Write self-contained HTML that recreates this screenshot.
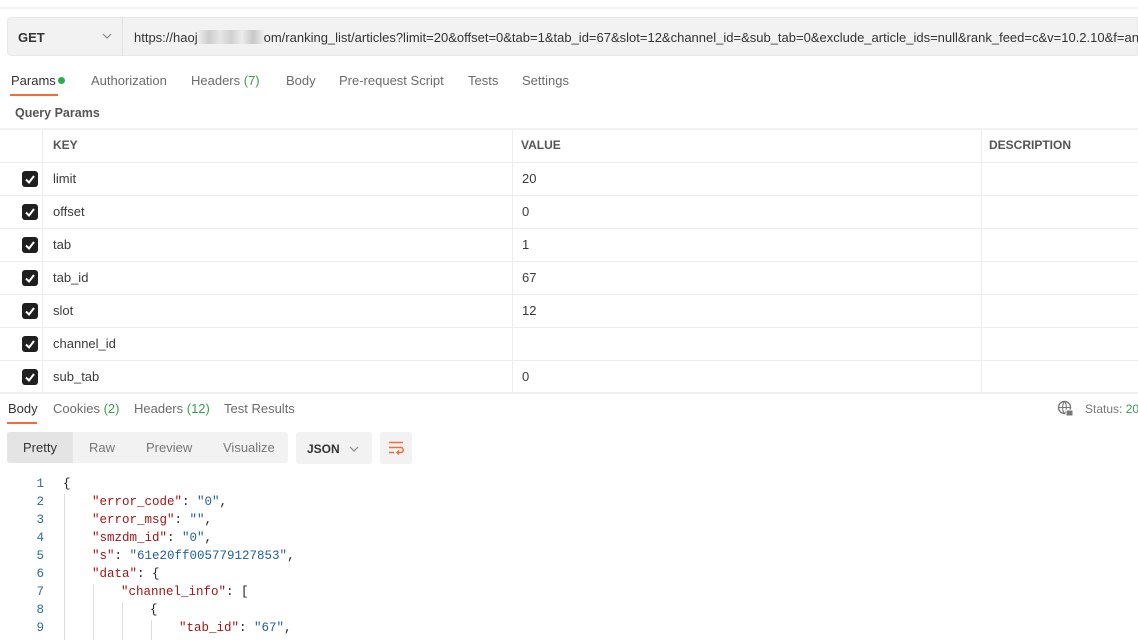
<!DOCTYPE html>
<html><head><meta charset="utf-8"><style>
*{margin:0;padding:0;box-sizing:border-box}
body{width:1138px;height:640px;overflow:hidden;background:#fff;font-family:"Liberation Sans",Arial,sans-serif;font-size:13px;color:#212121;position:relative}
.abs{position:absolute}
.hl{position:absolute;left:0;width:1138px;height:1px;background:#ededed}
.vl{position:absolute;width:1px;background:#ededed}
.tab{position:absolute;top:73px;color:#6b6b6b;font-size:13px}
.cb{position:absolute;left:22px;width:16px;height:16px;background:#1f1f1f;border-radius:3px}
.cb svg{position:absolute;left:2px;top:2px}
.k{position:absolute;left:53px;font-size:13px;color:#3a3a3a}
.v{position:absolute;left:522px;font-size:13px;color:#3a3a3a}
.code{font-family:"Liberation Mono",monospace;font-size:12.5px;position:absolute;white-space:pre}
.ln{position:absolute;left:20px;width:24px;text-align:right;color:#2a6f97;font-family:"Liberation Mono",monospace;font-size:12.5px}
.s{color:#a31515}.n{color:#1f5fa0}
</style></head><body>
<div class="abs" style="left:0;top:7px;width:1138px;height:2px;background:#f2f2f2"></div>
<div class="abs" style="left:7px;top:17px;width:1131px;height:39px;background:#f2f2f2;border-radius:4px 0 0 4px;border:1px solid #e8e8e8"></div>
<div class="abs" style="left:122px;top:17px;width:1px;height:39px;background:#e2e2e2"></div>
<div class="abs" style="left:18px;top:30px;font-weight:bold;font-size:13px;color:#333">GET</div>
<svg class="abs" style="left:102px;top:33px" width="10" height="7"><path d="M1 1L5 5L9 1" stroke="#888" fill="none" stroke-width="1.2"/></svg>
<div class="abs" style="left:134px;top:30px;font-size:13px;color:#333;white-space:nowrap">https://haoj<span style="display:inline-block;width:66px;height:14px;background:linear-gradient(90deg,#eee,#ccc,#e6e6e6,#d0d0d0,#ececec,#c8c8c8,#eee);vertical-align:-2px"></span>om/ranking_list/articles?limit=20&amp;offset=0&amp;tab=1&amp;tab_id=67&amp;slot=12&amp;channel_id=&amp;sub_tab=0&amp;exclude_article_ids=null&amp;rank_feed=c&amp;v=10.2.10&amp;f=android</div>
<div class="tab" style="left:11px;color:#333">Params</div>
<div class="abs" style="left:58px;top:77px;width:7px;height:7px;border-radius:50%;background:#26b14c"></div>
<div class="abs" style="left:10px;top:94px;width:48px;height:2px;background:#f26b3a"></div>
<div class="tab" style="left:91px">Authorization</div>
<div class="tab" style="left:191px">Headers <span style="color:#3b9d4f">(7)</span></div>
<div class="tab" style="left:286px">Body</div>
<div class="tab" style="left:339px">Pre-request Script</div>
<div class="tab" style="left:468px">Tests</div>
<div class="tab" style="left:522px">Settings</div>
<div class="abs" style="left:15px;top:106px;font-weight:bold;font-size:12.5px;color:#555">Query Params</div>
<div class="abs" style="left:0;top:128px;width:1138px;height:2px;background:#f2f2f2"></div>
<div class="vl" style="left:42px;top:129px;height:263px"></div>
<div class="vl" style="left:512px;top:129px;height:263px"></div>
<div class="vl" style="left:981px;top:129px;height:263px"></div>
<div class="abs" style="left:53px;top:138px;font-weight:bold;font-size:12px;color:#555">KEY</div>
<div class="abs" style="left:521px;top:138px;font-weight:bold;font-size:12px;color:#555">VALUE</div>
<div class="abs" style="left:989px;top:138px;font-weight:bold;font-size:12px;color:#555">DESCRIPTION</div>
<div class="hl" style="top:162px"></div><div class="hl" style="top:195px"></div><div class="hl" style="top:228px"></div><div class="hl" style="top:261px"></div><div class="hl" style="top:294px"></div><div class="hl" style="top:327px"></div><div class="hl" style="top:360px"></div>
<div class="hl" style="top:392px;height:2px;background:#f0f0f0"></div>

<div class="cb" style="top:171px"><svg width="12" height="12"><path d="M2 6.5L5 9.5L10 3" stroke="#fff" stroke-width="2" fill="none"/></svg></div><div class="k" style="top:171px">limit</div><div class="v" style="top:171px">20</div>
<div class="cb" style="top:204px"><svg width="12" height="12"><path d="M2 6.5L5 9.5L10 3" stroke="#fff" stroke-width="2" fill="none"/></svg></div><div class="k" style="top:204px">offset</div><div class="v" style="top:204px">0</div>
<div class="cb" style="top:237px"><svg width="12" height="12"><path d="M2 6.5L5 9.5L10 3" stroke="#fff" stroke-width="2" fill="none"/></svg></div><div class="k" style="top:237px">tab</div><div class="v" style="top:237px">1</div>
<div class="cb" style="top:270px"><svg width="12" height="12"><path d="M2 6.5L5 9.5L10 3" stroke="#fff" stroke-width="2" fill="none"/></svg></div><div class="k" style="top:270px">tab_id</div><div class="v" style="top:270px">67</div>
<div class="cb" style="top:303px"><svg width="12" height="12"><path d="M2 6.5L5 9.5L10 3" stroke="#fff" stroke-width="2" fill="none"/></svg></div><div class="k" style="top:303px">slot</div><div class="v" style="top:303px">12</div>
<div class="cb" style="top:336px"><svg width="12" height="12"><path d="M2 6.5L5 9.5L10 3" stroke="#fff" stroke-width="2" fill="none"/></svg></div><div class="k" style="top:336px">channel_id</div>
<div class="cb" style="top:369px"><svg width="12" height="12"><path d="M2 6.5L5 9.5L10 3" stroke="#fff" stroke-width="2" fill="none"/></svg></div><div class="k" style="top:369px">sub_tab</div><div class="v" style="top:369px">0</div>

<div class="abs" style="left:8px;top:401px;color:#333">Body</div>
<div class="abs" style="left:7px;top:422px;width:30px;height:2px;background:#f26b3a"></div>
<div class="abs" style="left:53px;top:401px;color:#6b6b6b">Cookies <span style="color:#3b9d4f">(2)</span></div>
<div class="abs" style="left:134px;top:401px;color:#6b6b6b">Headers <span style="color:#3b9d4f">(12)</span></div>
<div class="abs" style="left:224px;top:401px;color:#6b6b6b">Test Results</div>
<svg class="abs" style="left:1057px;top:400px" width="17" height="17" viewBox="0 0 17 17"><circle cx="7.5" cy="7.5" r="6" fill="none" stroke="#777" stroke-width="1.4"/><path d="M1.5 7.5H13.5M7.5 1.5C5 4 5 11 7.5 13.5M7.5 1.5C10 4 10 11 7.5 13.5" stroke="#777" fill="none" stroke-width="1.1"/><rect x="9" y="10" width="7" height="6" rx="1" fill="#777" stroke="#fff"/></svg>
<div class="abs" style="left:1085px;top:402px;font-size:12px;color:#777;white-space:nowrap">Status: <span style="color:#3b9d4f">200</span></div>

<div class="abs" style="left:7px;top:432px;width:281px;height:31px;background:#f2f2f2;border-radius:3px"></div>
<div class="abs" style="left:7px;top:432px;width:66px;height:31px;background:#e4e4e4;border-radius:3px 0 0 3px"></div>
<div class="abs" style="left:23px;top:440px;color:#333">Pretty</div>
<div class="abs" style="left:89px;top:440px;color:#777">Raw</div>
<div class="abs" style="left:146px;top:440px;color:#777">Preview</div>
<div class="abs" style="left:223px;top:440px;color:#777">Visualize</div>
<div class="abs" style="left:296px;top:432px;width:76px;height:32px;background:#f2f2f2;border-radius:3px"></div>
<div class="abs" style="left:307px;top:442px;font-weight:bold;font-size:12px;color:#333">JSON</div>
<svg class="abs" style="left:349px;top:446px" width="10" height="7"><path d="M1 1L5 5L9 1" stroke="#888" fill="none" stroke-width="1.2"/></svg>
<div class="abs" style="left:380px;top:432px;width:32px;height:32px;background:#f2f2f2;border-radius:3px"></div>
<svg class="abs" style="left:388px;top:441px" width="17" height="14"><path d="M1 1.5H15M1 6.5H13C16 6.5 16 11.5 13 11.5H9M1 11.5H6M11 9.5L9 11.5L11 13.5" stroke="#f26b3a" stroke-width="1.4" fill="none"/></svg>

<div class="ln" style="top:477px">1</div><div class="ln" style="top:495px">2</div><div class="ln" style="top:513px">3</div><div class="ln" style="top:531px">4</div><div class="ln" style="top:549px">5</div><div class="ln" style="top:567px">6</div><div class="ln" style="top:585px">7</div><div class="ln" style="top:603px">8</div><div class="ln" style="top:621px">9</div>
<div class="abs" style="left:64px;top:494px;width:1px;height:146px;background:#ddd"></div>
<div class="abs" style="left:93px;top:584px;width:1px;height:56px;background:#ddd"></div>
<div class="abs" style="left:122px;top:602px;width:1px;height:38px;background:#ddd"></div>
<div class="abs" style="left:151px;top:620px;width:1px;height:20px;background:#ddd"></div>
<div class="code" style="left:63px;top:477px">{</div>
<div class="code" style="left:92px;top:495px"><span class="s">"error_code"</span>: <span class="n">"0"</span>,</div>
<div class="code" style="left:92px;top:513px"><span class="s">"error_msg"</span>: <span class="n">""</span>,</div>
<div class="code" style="left:92px;top:531px"><span class="s">"smzdm_id"</span>: <span class="n">"0"</span>,</div>
<div class="code" style="left:92px;top:549px"><span class="s">"s"</span>: <span class="n">"61e20ff005779127853"</span>,</div>
<div class="code" style="left:92px;top:567px"><span class="s">"data"</span>: {</div>
<div class="code" style="left:121px;top:585px"><span class="s">"channel_info"</span>: [</div>
<div class="code" style="left:150px;top:603px">{</div>
<div class="code" style="left:179px;top:621px"><span class="s">"tab_id"</span>: <span class="n">"67"</span>,</div>
</body></html>
